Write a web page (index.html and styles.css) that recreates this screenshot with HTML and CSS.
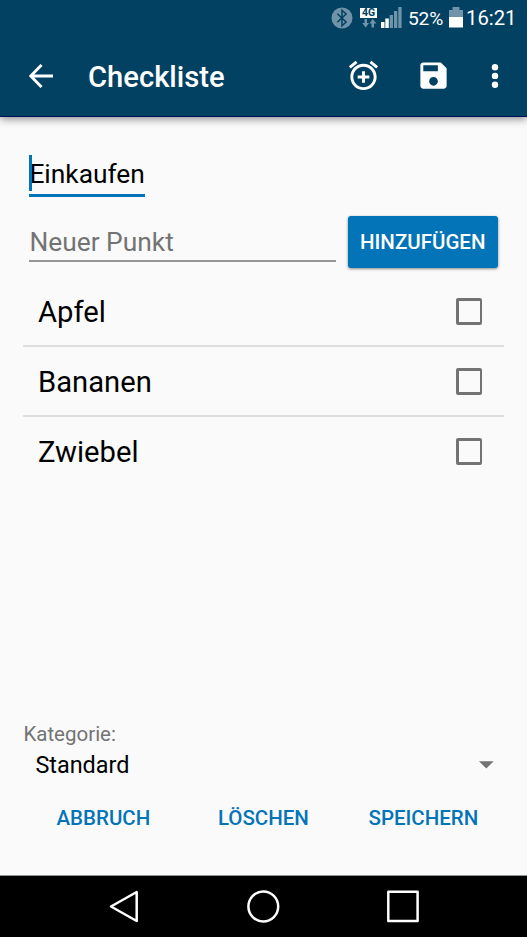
FILE: index.html
```html
<!DOCTYPE html>
<html lang="de">
<head>
<meta charset="utf-8">
<title>Checkliste</title>
<link rel="stylesheet" href="styles.css">
</head>
<body>
<div class="screen">
  <header class="header">
    <div class="status">
      <svg class="bluetooth" width="22" height="22" viewBox="0 0 22 22"><circle cx="11" cy="11" r="10.5" fill="#6f94a9"/><path d="M6.300 6.800l8.800 8.200-4.100 3.800V3.200l4.100 3.800-8.800 8.200" fill="none" stroke="#024162" stroke-width="1.500"/></svg>
      <span class="network">
        <span class="network-label">4G</span>
        <svg width="16" height="9" viewBox="0 0 16 9"><path d="M3.500 0h2.500v4h2L4.700 8.500 1.200 4h2.300zM10.500 8.500H13V4.500h2.500L11.700 0 8.400 4.500h2.100z" fill="#6f94a9"/></svg>
      </span>
      <svg class="signal" width="21" height="21" viewBox="0 0 21 21"><path d="M0 15h3.500v6H0zM4.300 11.500h3.500V21H4.300z" fill="#fff"/><path d="M8.700 8h3.300v13H8.700zM13 4h3.300v17H13zM17.300 0h3.300v21h-3.300z" fill="#6f94a9"/></svg>
      <span class="percent">52%</span>
      <svg class="battery" width="14" height="21" viewBox="0 0 14 21"><path d="M0 3h3.500V0h7v3H14v8H0z" fill="#6f94a9"/><path d="M0 10h14v10.500H0z" fill="#fff"/></svg>
      <span class="clock">16:21</span>
    </div>
    <div class="toolbar">
      <svg class="back" width="24" height="24" viewBox="0 0 24 24"><path d="M12.500 1L1.700 12l10.800 11M2 12h22" fill="none" stroke="#fff" stroke-width="2.900"/></svg>
      <h1 class="title">Checkliste</h1>
      <svg class="alarm" width="35" height="35" viewBox="0 0 24 24" fill="#fff"><path d="M7.880 3.390L6.600 1.860 2 5.710l1.290 1.530 4.590-3.850zM22 5.720l-4.600-3.860-1.290 1.530 4.600 3.860L22 5.720zM12 4c-4.970 0-9 4.030-9 9s4.020 9 9 9c4.970 0 9-4.030 9-9s-4.030-9-9-9zm0 16c-3.870 0-7-3.130-7-7s3.130-7 7-7 7 3.130 7 7-3.130 7-7 7zm1-11h-2v3H8v2h3v3h2v-3h3v-2h-3V9z"/></svg>
      <svg class="save" width="35" height="35" viewBox="0 0 24 24" fill="#fff"><path d="M17 3H5c-1.110 0-2 .9-2 2v14c0 1.100.89 2 2 2h14c1.100 0 2-.9 2-2V7l-4-4zm-5 16c-1.660 0-3-1.340-3-3s1.340-3 3-3 3 1.340 3 3-1.340 3-3 3zm3-10H5V5h10v4z"/></svg>
      <svg class="more" width="8" height="26" viewBox="0 0 8 26" fill="#fff"><circle cx="4" cy="4.200" r="3.200"/><circle cx="4" cy="12.900" r="3.200"/><circle cx="4" cy="21.800" r="3.200"/></svg>
    </div>
  </header>
  <main class="content">
    <div class="name-field"><span>Einkaufen</span><i class="caret"></i></div>
    <div class="add-row">
      <div class="item-field"><span>Neuer Punkt</span></div>
      <button class="add">HINZUFÜGEN</button>
    </div>
    <ul class="list">
      <li><span>Apfel</span><i class="box"></i></li>
      <li><span>Bananen</span><i class="box"></i></li>
      <li><span>Zwiebel</span><i class="box"></i></li>
    </ul>
    <div class="category-label">Kategorie:</div>
    <div class="category"><span>Standard</span><svg width="15" height="8" viewBox="0 0 15 8"><path d="M0 .3h14.600L7.300 7.600z" fill="#737373"/></svg></div>
    <div class="actions"><span>ABBRUCH</span><span>LÖSCHEN</span><span>SPEICHERN</span></div>
  </main>
  <nav class="nav">
    <svg width="32" height="34" viewBox="0 0 32 34"><path d="M3 16.500L28.700 2v29z"/></svg>
    <svg width="34" height="34" viewBox="0 0 34 34"><circle cx="17.300" cy="16.500" r="14.900"/></svg>
    <svg width="34" height="34" viewBox="0 0 34 34"><path d="M2.300 1.700h29.300v29.300H2.300z"/></svg>
  </nav>
</div>
</body>
</html>
```
FILE: styles.css
```css
* { box-sizing: border-box; }
body { margin: 0; font-family: Roboto, "Liberation Sans", sans-serif; background: #fafafa; color: #000; }
.screen { width: 527px; height: 937px; display: flex; flex-direction: column; overflow: hidden; }
.header { height: 117px; flex: none; background: #024162; border-bottom: 1px solid #00115c; box-shadow: 0 2px 8px rgba(0,0,0,.45); color: #fff; }
.status { height: 37px; display: flex; justify-content: flex-end; align-items: flex-start; padding: 7px 11px 0 0; }
.bluetooth { margin-right: 7px; }
.network { width: 17px; display: flex; flex-direction: column; align-items: center; margin: 1px 4px 0 0; }
.network-label { width: 17px; height: 10px; margin-bottom: 1px; background: #fff; color: #024162; font-size: 10.500px; font-weight: 700; line-height: 10px; text-align: center; }
.signal { margin-right: 6px; }
.percent { width: 35px; margin-right: 6px; font-size: 19.200px; line-height: 23px; letter-spacing: -.2px; white-space: nowrap; }
.battery { margin-right: 3px; }
.clock { width: 50px; font-size: 20.300px; line-height: 23px; white-space: nowrap; }
.toolbar { height: 79px; display: flex; align-items: center; padding: 0 28px 0 29px; }
.back { margin-top: -1px; }
.title { margin: 1px auto 0 35px; font-size: 29.200px; font-weight: 500; line-height: 40px; }
.alarm { margin: -2px 35px 0 0; }
.save { margin: -2px 40px 0 0; }
.more { margin-top: -1px; }
.content { flex: 1; display: flex; flex-direction: column; padding: 37px 23px 0 23.400px; }
.name-field { position: relative; width: 115.500px; height: 42.500px; margin-left: 6px; border-bottom: 3px solid #0374b7; font-size: 26.350px; line-height: 40px; }
.caret { position: absolute; left: 0; top: 1px; width: 2.600px; height: 36px; background: #0374b7; }
.add-row { display: flex; margin: 19px 6.500px 0 6px; gap: 12px; }
.item-field { flex: 1; height: 46.500px; border-bottom: 2px solid #959595; color: #737373; font-size: 26.350px; line-height: 52px; }
.add { width: 149.500px; height: 52.500px; padding: 2px 0 0; border: 0; border-radius: 3px; background: #0374b7; color: #fff; font: 500 20.500px/49px Roboto, sans-serif; box-shadow: 0 1px 3px rgba(0,0,0,.45); }
.list { margin: 9px 0 0; padding: 0; list-style: none; }
.list li { height: 70px; display: flex; justify-content: space-between; align-items: center; padding: 2px 22px 0 14.600px; border-bottom: 2px solid #dedede; font-size: 29.200px; }
.list li:last-child { border-bottom-color: transparent; }
.box { width: 26px; height: 27px; margin-top: -2px; border: solid #737373; border-width: 3px 2px 3px 3px; border-radius: 2px; }
.category-label { margin-top: auto; height: 29.500px; color: #737373; font-size: 20.500px; line-height: 30px; }
.category { height: 33px; padding: 0 10.500px 0 12px; display: flex; justify-content: space-between; align-items: center; font-size: 23.400px; }
.actions { height: 93.500px; padding-top: 21.500px; display: grid; grid-template-columns: repeat(3, 160px); text-align: center; color: #0374b7; font-size: 20.500px; font-weight: 500; line-height: 30px; }
.nav { height: 62px; flex: none; background: #000; border-top: 1px solid #8f9595; display: flex; justify-content: space-between; align-items: flex-start; padding: 14px 107px 0 108px; fill: none; stroke: #fff; stroke-width: 2.500; stroke-linejoin: round; }
```
